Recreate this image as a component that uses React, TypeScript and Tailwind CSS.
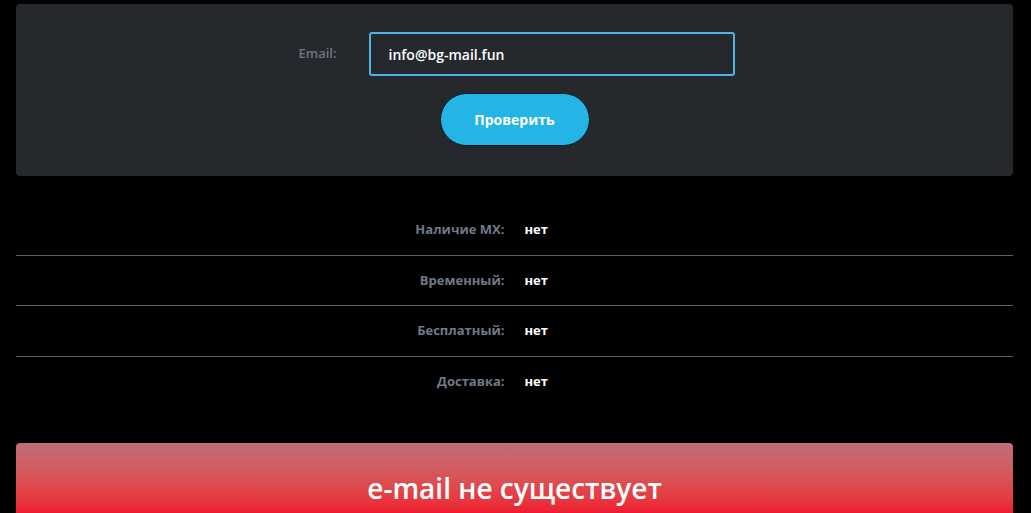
const rows = [
  { label: 'Наличие MX:', value: 'нет' },
  { label: 'Временный:', value: 'нет' },
  { label: 'Бесплатный:', value: 'нет' },
  { label: 'Доставка:', value: 'нет' },
];

export default function App() {
  return (
    <div className="min-h-[513px] bg-black pl-4 pr-[18px] pt-1 font-['Open_Sans',sans-serif]">
      <div className="flex flex-col items-center rounded bg-[#25282d] pt-7 pb-[30px]">
        <div className="flex items-center gap-8 pl-1">
          <label className="text-[13px] font-semibold text-[#6b7686]">Email:</label>
          <input
            defaultValue="info@bg-mail.fun"
            className="h-11 w-[366px] rounded-[3px] border-2 border-[#4fb6e3] bg-transparent px-[18px] text-[14px] font-semibold text-white outline-none"
          />
        </div>
        <button className="mt-[17px] h-[53px] w-[150px] rounded-full border border-[#0c1a22] bg-[#24b4e5] text-[14px] font-bold text-white">
          Проверить
        </button>
      </div>

      <div className="mt-[29px]">
        {rows.map((r, i) => (
          <div
            key={r.label}
            className={
              'grid h-[50.5px] grid-cols-2 items-center' +
              (i < rows.length - 1 ? ' border-b border-[#5a606a]' : '')
            }
          >
            <div className="pr-[10px] text-right text-[13px] font-bold text-[#6f7a8a]">{r.label}</div>
            <div className="pl-[10px] text-[13px] font-bold text-white">{r.value}</div>
          </div>
        ))}
      </div>

      <div className="mt-[36px] flex h-[70px] justify-center rounded-t bg-gradient-to-b from-[#bf6e78] to-[#ee1a2e] pt-[24px]">
        <span className="text-[28px] font-semibold text-white">e-mail не существует</span>
      </div>
    </div>
  );
}
